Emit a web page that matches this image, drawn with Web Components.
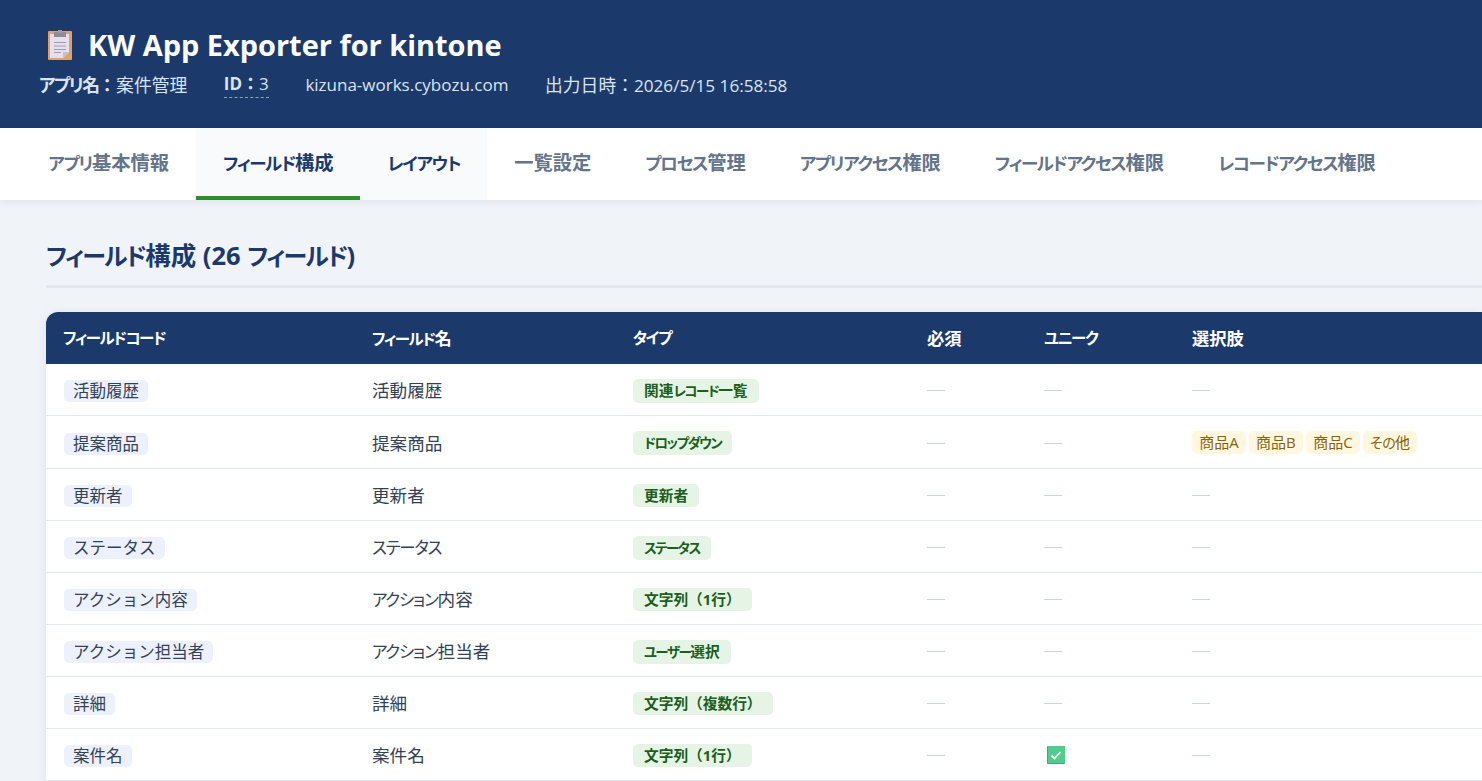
<!DOCTYPE html>
<html lang="ja">
<head>
<meta charset="utf-8">
<title>KW App Exporter for kintone</title>
<style>
  html, body { margin: 0; padding: 0; height: 100%; overflow: hidden; }
  body {
    background: #f0f3f8;
    color: #1e293b;
    font-family: "Open Sans", "Noto Sans CJK JP", sans-serif;
  }
</style>
</head>
<body>
<app-header></app-header>
<tab-bar></tab-bar>
<main-panel></main-panel>

<script>
// brackets and colons stay full width, kana runs get a narrower setting
const fullWidth = (s) => s.replace(/[（）：]/g, (c) => `<span class="fw">${c}</span>`);
const kana = (s) => s.replace(/[ぁ-んァ-ヶー]+/g, (m) => `<span class="k">${m}</span>`);

class AppHeader extends HTMLElement {
  constructor() {
    super();
    this.attachShadow({ mode: "open" });
    this.shadowRoot.innerHTML = `
      <style>
        :host { display: block; background: #1b3a6b; color: #fff; height: 128px; box-sizing: border-box; padding: 25px 39px 0; }
        .title { display: flex; align-items: center; gap: 13px; margin: 0 0 0 6px; font-size: 28.950px; font-weight: 700; line-height: 40px; }
        .title svg { width: 30px; height: 32px; flex: none; }
        .meta { display: flex; gap: 36.600px; margin-top: 6px; font-size: 17px; line-height: 28px; color: #dbe3ee; font-feature-settings: "palt"; }
        .meta b { font-weight: 700; }
        .jp { font-size: 17.800px; }
        .meta b .k { letter-spacing: -1.700px; }
        .fw { font-feature-settings: normal; }
        .id { border-bottom: 1px dashed #8fa3bf; line-height: 25px; height: 26px; }
        .date { font-size: 17.150px; }
      </style>
      <div class="title">
        <svg viewBox="0 0 30 32">
          <rect x="3" y="2" width="24" height="29" rx="1" fill="#e0a068"/>
          <path d="M5 5h19v18l-6 6H5z" fill="#e6dfef"/>
          <path d="M18 29l6-6h-6z" fill="#c9bfd2"/>
          <rect x="9" y="3" width="12" height="5" fill="#8f8a97"/>
          <rect x="13" y="1" width="4" height="3" fill="#a09bab"/>
          <path d="M9 13.500h12M9 17h12M9 20.500h12M9 23.500h7" stroke="#a09bab" stroke-width="1.200"/>
        </svg>
        <span>KW App Exporter for kintone</span>
      </div>
      <div class="meta">
        <span class="jp"><b>${fullWidth(kana("アプリ名：").replace("名", '<span class="k">名</span>'))}</b>案件管理</span>
        <span class="id"><b>ID${fullWidth("：")}</b>3</span>
        <span>kizuna-works.cybozu.com</span>
        <span class="date"><span class="jp">${fullWidth("出力日時：")}</span>2026/5/15 16:58:58</span>
      </div>
    `;
  }
}

class TabBar extends HTMLElement {
  constructor() {
    super();
    this.attachShadow({ mode: "open" });
    const tabs = ["アプリ基本情報", "フィールド構成", "レイアウト", "一覧設定", "プロセス管理", "アプリアクセス権限", "フィールドアクセス権限", "レコードアクセス権限"];
    this.shadowRoot.innerHTML = `
      <style>
        :host { display: flex; position: relative; height: 72px; padding-left: 21.500px; background: #fff; box-shadow: 0 2px 8px rgba(27, 58, 107, .08); }
        .tab { box-sizing: border-box; height: 72px; padding: 0 27px; border-bottom: 4px solid transparent; font-size: 19.300px; font-weight: 600; line-height: 70px; color: #64748b; white-space: nowrap; font-feature-settings: "palt"; }
        .k { font-size: 17.500px; letter-spacing: -1.350px; }
        .active { background: #f8fafc; border-bottom-color: #2e8b2e; color: #1b3a6b; }
        .hover { background: #f8fafc; color: #1b3a6b; }
      </style>
      ${tabs.map((t, i) => `<div class="tab ${i === 1 ? "active" : i === 2 ? "hover" : ""}">${kana(t)}</div>`).join("")}
    `;
  }
}

class KwPill extends HTMLElement {
  constructor() {
    super();
    this.attachShadow({ mode: "open" });
    this.shadowRoot.innerHTML = `
      <style>
        :host { display: inline-block; border-radius: 5px; white-space: nowrap; vertical-align: middle; }
        :host([kind="code"]) { margin-left: 1px; padding: 0 9px; background: #edf1fd; color: #334155; font-size: 16.500px; line-height: 22px; }
        :host([kind="type"]) { padding: 0 11px; background: #e6f4e6; color: #1b5e20; font-size: 14.700px; font-weight: 700; line-height: 23px; font-feature-settings: "palt"; }
        :host([kind="option"]) { padding: 0 7.200px; background: #fff7e0; color: #85640a; font-size: 15px; line-height: 22px; font-feature-settings: "palt"; }
      </style>
      <slot></slot>
    `;
  }
}

class FieldTable extends HTMLElement {
  constructor() {
    super();
    this.attachShadow({ mode: "open" });
    const dash = `<span class="dash"></span>`;
    const check = `<svg class="check" viewBox="0 0 18 18"><rect width="18" height="18" rx="1" fill="#3fa877"/><rect x="1" width="17" height="17" rx="1" fill="#52cc8c"/><path d="M4.500 9.500l3 3 6-6.500" fill="none" stroke="#fff" stroke-width="1.800"/></svg>`;
    const rows = [
      ["活動履歴", "活動履歴", "関連レコード一覧"],
      ["提案商品", "提案商品", "ドロップダウン", false, ["商品A", "商品B", "商品C", "その他"]],
      ["更新者", "更新者", "更新者"],
      ["ステータス", "ステータス", "ステータス"],
      ["アクション内容", "アクション内容", "文字列（1行）"],
      ["アクション担当者", "アクション担当者", "ユーザー選択"],
      ["詳細", "詳細", "文字列（複数行）"],
      ["案件名", "案件名", "文字列（1行）", true],
    ];
    const heads = ["フィールドコード", "フィールド名", "タイプ", "必須", "ユニーク", "選択肢"];
    this.shadowRoot.innerHTML = `
      <style>
        :host { display: block; background: #fff; border-radius: 12px 0 0 0; box-shadow: 0 2px 12px rgba(27, 58, 107, .08); overflow: hidden; }
        table { border-collapse: separate; border-spacing: 0; table-layout: fixed; width: 100%; }
        th { box-sizing: border-box; height: 52px; padding: 0 17px 1px; background: #1b3a6b; color: #fff; font-size: 17.300px; font-weight: 700; text-align: left; white-space: nowrap; font-feature-settings: "palt"; }
        th .k { font-size: 15.500px; letter-spacing: -1.400px; }
        td { box-sizing: border-box; height: 52px; padding: 0 17px; border-bottom: 1px solid #e2e8f0; font-size: 17.600px; color: #334155; vertical-align: middle; font-feature-settings: "palt"; }
        td .k { font-size: 16.500px; letter-spacing: -1.200px; }
        kw-pill[kind="code"] { font-feature-settings: normal; }
        kw-pill[kind="type"] .k { font-size: 13.500px; letter-spacing: -1.500px; }
        kw-pill[kind="option"] .k { font-size: 14px; letter-spacing: -.500px; }
        tr.tall td { height: 53px; }
        .opts { display: flex; gap: 3px; }
        .dash { display: block; width: 18px; height: 1px; margin-top: 2px; background: #cbd5e1; }
        .check { display: block; width: 18px; height: 18px; margin-left: 3px; }
        .fw { font-feature-settings: normal; }
      </style>
      <table>
        <colgroup><col style="width:309px"><col style="width:261px"><col style="width:294px"><col style="width:117px"><col style="width:148px"><col></colgroup>
        <thead><tr>${heads.map((h) => `<th>${kana(h)}</th>`).join("")}</tr></thead>
        <tbody>
          ${rows.map(([code, name, type, unique, opts]) => `
            <tr class="${opts ? "tall" : ""}">
              <td><kw-pill kind="code">${code}</kw-pill></td>
              <td>${kana(name)}</td>
              <td><kw-pill kind="type">${fullWidth(kana(type))}</kw-pill></td>
              <td>${dash}</td>
              <td>${unique ? check : dash}</td>
              <td>${opts ? `<div class="opts">${opts.map((o) => `<kw-pill kind="option">${kana(o)}</kw-pill>`).join("")}</div>` : dash}</td>
            </tr>`).join("")}
        </tbody>
      </table>
    `;
  }
}

class MainPanel extends HTMLElement {
  constructor() {
    super();
    this.attachShadow({ mode: "open" });
    this.shadowRoot.innerHTML = `
      <style>
        :host { display: block; padding: 36px 0 0 46px; }
        h2 { margin: 0 0 24px; padding-bottom: 11px; height: 38px; border-bottom: 3px solid #e2e8f0; color: #1b3a6b; font-size: 25.500px; font-weight: 700; line-height: 38px; font-feature-settings: "palt"; }
        .k { font-size: 24px; letter-spacing: -1.700px; }
      </style>
      <h2>${kana("フィールド構成 (26 フィールド)")}</h2>
      <field-table></field-table>
    `;
  }
}

customElements.define("app-header", AppHeader);
customElements.define("tab-bar", TabBar);
customElements.define("kw-pill", KwPill);
customElements.define("field-table", FieldTable);
customElements.define("main-panel", MainPanel);
</script>
</body>
</html>
